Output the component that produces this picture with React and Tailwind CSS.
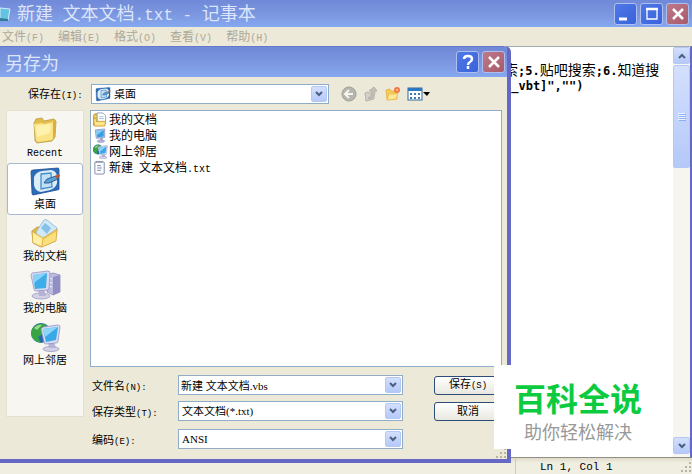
import React, { useState } from 'react';

const latinSizes = {
  small: "font-['Liberation_Mono',monospace] text-[9px]",
  base: "font-['Liberation_Mono',monospace] text-[10px]",
  editor: "font-['DejaVu_Sans_Mono',monospace] text-[12px] font-bold",
  title: "font-['Liberation_Mono',monospace] text-[16px]",
};

// Latin glyphs are set smaller so they take about half of a Chinese character
const Mixed = ({ text, size = 'base' }) => (
  <span className="whitespace-pre">
    {text.split(/([\x20-\x7e]+)/).map((part, i) =>
      i % 2 ? (
        <span key={i} className={`leading-none ${latinSizes[size]}`}>{part}</span>
      ) : (
        part
      )
    )}
  </span>
);

const FolderIcon = ({ className }) => (
  <svg className={className} viewBox="0 0 32 30">
    <path d="M5 9l2-4 6-1 2 3 10-2 2 2-1 16-3 4-15 2-2-2z" fill="#e3bd4c" stroke="#b99a48" strokeWidth=".8" />
    <path d="M5 10l8-1 2 1 9-2 1 15-2 3-14 2-2-2z" fill="#fbe486" />
    <path d="M7 12l15-2-1 9-13 4z" fill="#fff2ae" />
    <path d="M24 8l3-1-1 16-2 3z" fill="#d9b040" />
  </svg>
);

const DesktopIcon = ({ className }) => (
  <svg className={className} viewBox="0 0 32 30">
    <path d="M4 4l25-2q1 0 1 2v19q0 1-2 1L4 29q-1 0-1-2L2 6q0-2 2-2z" fill="#2d6cb9" stroke="#1a4f93" strokeWidth=".8" />
    <path d="M5 11q2-5 8-6l9-1q6 1 6 7v6q-1 5-7 7l-9 2q-6-1-7-7z" fill="#dcedf5" />
    <path d="M12 8l10-1 1 14-11 2z" fill="#bfe0f8" stroke="#448ecb" strokeWidth="1.3" />
    <path d="M15 17l3-4 9-3 2 3-9 4z" fill="#5aa2d6" stroke="#23558c" strokeWidth=".9" />
    <path d="M26 10l4-2 1 2-3 3z" fill="#bd5334" />
  </svg>
);

const DocumentsIcon = ({ className }) => (
  <svg className={className} viewBox="0 0 32 30">
    <path d="M3 13l5-4 20 2-2 12-14 6-8-4z" fill="#e6b943" stroke="#c79a3a" strokeWidth=".8" />
    <path d="M7 14l8-12q1-1 3 0l10 8-5 14-13 2z" fill="#cfe9f7" stroke="#86b4d2" strokeWidth=".8" />
    <path d="M12 10l4-5 6 5-4 6z" fill="#85c1e8" />
    <path d="M3 13l11 7 14-9-1 12-14 6-9-4z" fill="#fbdf7b" stroke="#d2a644" strokeWidth=".8" />
    <path d="M4 15l9 6-1 7-8-4z" fill="#fff0a8" />
    <path d="M13 28l1-7 13-8" fill="none" stroke="#dfb84e" />
  </svg>
);

const Folder16 = ({ className }) => (
  <svg className={className} viewBox="0 0 16 16">
    <path d="M1 5l1-3h4l2 2h4v10H1z" fill="#f0c650" stroke="#b38e35" />
    <path d="M5 1h6l3 3v8H5z" fill="#fff" stroke="#8c9fb8" />
    <path d="M7 5h5M7 7h5" stroke="#9fc3e2" />
    <path d="M1 7h3v3h10l-1 5H2z" fill="#ffe48a" stroke="#c9a042" />
  </svg>
);

const ComputerIcon = ({ className }) => (
  <svg className={className} viewBox="0 0 32 30">
    <path d="M18 5l6-2 7 2v17l-7 3-6-3z" fill="#bdbcdf" stroke="#8f8dbd" strokeWidth=".8" />
    <path d="M24 7l7-2v17l-7 3z" fill="#908ec4" />
    <path d="M19 8l4 1m-4 3l4 1m-4 3l4 1" stroke="#f2f2fc" />
    <ellipse cx="12" cy="26" rx="9" ry="3" fill="#d3d1e8" stroke="#9d9bc4" strokeWidth=".8" />
    <path d="M9 19h6l2 7h-7z" fill="#b4b2d6" />
    <path d="M3 3l16-2q2 0 2 2l-1 15q0 2-2 2l-11 1q-2 0-2-2L2 5z" fill="#d7daf0" stroke="#9096c5" strokeWidth=".8" />
    <path d="M4 5l14-2-1 15-11 1z" fill="#3cade9" />
    <path d="M4 5l14-2-13 10z" fill="#89d2f7" />
  </svg>
);

const Computer16 = ({ className }) => (
  <svg className={className} viewBox="0 0 16 16">
    <ellipse cx="9" cy="14" rx="4" ry="1.5" fill="#bcbad8" stroke="#908eb5" strokeWidth=".5" />
    <path d="M8 10h3v4H8z" fill="#aaa8cf" />
    <path d="M3 2l10-1v9l-9 1z" fill="#cdd5ef" stroke="#7c8fc4" strokeWidth=".8" />
    <path d="M4 3l8-1v7l-7 1z" fill="#369fe0" />
    <path d="M4 3l8-1-8 6z" fill="#8bcdf5" />
  </svg>
);

const NetworkIcon = ({ className }) => (
  <svg className={className} viewBox="0 0 32 30">
    <circle cx="12" cy="11" r="10" fill="#2468af" />
    <path d="M3 7q6-8 15-4l-6 5 2 4-5 3 3 6q-9-2-10-9z" fill="#37a544" />
    <path d="M5 6q4-4 8-3L8 8z" fill="#9bdb8d" />
    <ellipse cx="22" cy="27" rx="8" ry="2.5" fill="#d3d1e8" stroke="#9d9bc4" strokeWidth=".8" />
    <path d="M19 20h6l2 6h-7z" fill="#b4b2d6" />
    <path d="M14 5l15-2q2 0 2 2l-2 14q0 2-2 2l-10 1q-2 0-2-2L12 7z" fill="#d7daf0" stroke="#9096c5" strokeWidth=".8" />
    <path d="M14 7l15-2-2 13-10 2z" fill="#38a8e8" />
    <path d="M14 7l15-2-13 10z" fill="#8cd4f8" />
  </svg>
);

const TextFileIcon = ({ className }) => (
  <svg className={className} viewBox="0 0 16 16">
    <rect x="2.500" y="2" width="10" height="13" rx="1" fill="#fdfdff" stroke="#8088a0" />
    <path d="M4 1v2m2-2v2m2-2v2m2-2v2" stroke="#747c96" />
    <path d="M5 6h4M5 8.500h5M5 11h4" stroke="#7084ae" />
  </svg>
);

const places = [
  { name: 'Recent', Icon: FolderIcon },
  { name: '桌面', Icon: DesktopIcon },
  { name: '我的文档', Icon: DocumentsIcon },
  { name: '我的电脑', Icon: ComputerIcon },
  { name: '网上邻居', Icon: NetworkIcon },
];

const files = [
  { name: '我的文档', Icon: Folder16 },
  { name: '我的电脑', Icon: Computer16 },
  { name: '网上邻居', Icon: NetworkIcon },
  { name: '新建 文本文档.txt', Icon: TextFileIcon },
];

const menus = ['文件(F)', '编辑(E)', '格式(O)', '查看(V)', '帮助(H)'];

const Chevron = ({ up }) => (
  <svg className="h-2 w-2" viewBox="0 0 8 8" fill="none" stroke="#4a6080" strokeWidth="2">
    <path d={up ? 'M1 6l3-3 3 3' : 'M1 2l3 3 3-3'} />
  </svg>
);

const arrowBox = 'flex items-center justify-center rounded-xs border border-[#b5c8f4] bg-linear-to-b from-[#d3dffd] to-[#b5c9f8]';

const CaptionButton = ({ label, close, children }) => (
  <button
    aria-label={label}
    className={`flex h-[22px] w-[23px] items-center justify-center rounded-[3px] border border-[#aebff0] ${
      close ? 'bg-linear-to-br from-[#bd7a8a] to-[#a95a6a]' : 'bg-linear-to-br from-[#4f78e6] to-[#3a62dc]'
    }`}
  >
    <svg className="h-4 w-4" viewBox="0 0 16 16" fill="none" stroke="#fff" strokeWidth="2.5">
      {children}
    </svg>
  </button>
);

const field = "h-full w-full appearance-none border border-[#8facc8] bg-white text-[11px] leading-none text-black outline-none font-['Liberation_Serif','Noto_Sans_CJK_SC',serif]";

const SelectField = ({ id, value, className = 'px-[3px]' }) => (
  <>
    <select id={id} className={`${field} ${className}`}>
      <option>{value}</option>
    </select>
    <span className={`pointer-events-none absolute inset-y-0.5 right-0.5 w-4 ${arrowBox}`}>
      <Chevron />
    </span>
  </>
);

const FormRow = ({ id, label, children, action }) => (
  <div className="flex h-5 items-center">
    <label htmlFor={id} className="w-[88px] shrink-0 pl-0.5">
      <Mixed text={label} size="small" />
    </label>
    <div className="relative h-5 w-[225px] shrink">{children}</div>
    {action && (
      <button className="ml-auto h-[19px] w-[68px] rounded-[3px] border border-[#2d4d79] bg-linear-to-b from-white to-[#e9e8e0] pb-px leading-none">
        <Mixed text={action} size="small" />
      </button>
    )}
  </div>
);

const Grip = ({ className }) => (
  <svg className={className} viewBox="0 0 12 12" fill="#b8b4a0">
    <path d="M9 1h2v2H9zM5 5h2v2H5zM9 5h2v2H9zM1 9h2v2H1zM5 9h2v2H5zM9 9h2v2H9z" />
  </svg>
);

const SaveDialog = () => {
  const [place, setPlace] = useState('桌面');
  const [fileName, setFileName] = useState('新建 文本文档.vbs');

  return (
    <section className="absolute top-[46px] right-[181px] left-0 rounded-tr-md border-r-4 border-b-4 border-[#6569c5] bg-[#ece9d8] text-[11px]">
      <header className="flex h-[31px] items-center justify-between rounded-tr-sm border-t border-[#6678cc] bg-linear-to-b from-[#7089d8] via-[#7b96df] to-[#86a8f0] pr-0.5 pl-[5px]">
        <h2 className="text-[18px] leading-none text-[#dce5fb]">另存为</h2>
        <div className="flex gap-[3px]">
          <CaptionButton label="帮助">
            <path d="M4 5q0-3 4-3t4 3q0 2-2 3t-2 3" />
            <path d="M8 12v3" />
          </CaptionButton>
          <CaptionButton label="关闭" close>
            <path d="M3 3l10 10M13 3L3 13" />
          </CaptionButton>
        </div>
      </header>

      <div className="mt-[7px] flex h-5 items-center">
        <label htmlFor="folder" className="w-[91px] shrink-0 pb-0.5 pl-7">
          <Mixed text="保存在(I):" size="small" />
        </label>
        <div className="relative h-5 w-[238px] shrink">
          <SelectField id="folder" value="桌面" className="pl-[22px]" />
          <DesktopIcon className="pointer-events-none absolute top-0.5 left-1 h-4 w-4" />
        </div>
        <div className="ml-3 flex items-center gap-1.5">
          <button aria-label="后退">
            <svg className="h-4 w-4" viewBox="0 0 16 16">
              <circle cx="8" cy="8" r="7" fill="#b6b5ae" stroke="#a09f98" />
              <path d="M12 8H5m3-4L4 8l4 4" fill="none" stroke="#f5f4ee" strokeWidth="2" />
            </svg>
          </button>
          <button aria-label="向上一级">
            <svg className="h-4 w-4" viewBox="0 0 16 16" stroke="#a9a8a0" strokeWidth=".8">
              <path d="M2 7l3-1 1 1h5v6l-8 2z" fill="#d3d1c7" />
              <path d="M5 12q4-1 4-7H6l5-4 3 4h-2q0 6-5 8z" fill="#c3c1b9" />
            </svg>
          </button>
          <button aria-label="新建文件夹">
            <svg className="h-4 w-4" viewBox="0 0 16 16">
              <path d="M1 4l4-1 1 2h6v8l-10 1z" fill="#f5cb55" stroke="#e6b04a" strokeWidth=".8" />
              <path d="M2 14l2-6h9l-2 5z" fill="#ffe994" stroke="#eaba52" strokeWidth=".8" />
              <circle cx="12" cy="4" r="3" fill="#f07a42" />
              <circle cx="12" cy="4" r="1" fill="#ffd9a0" />
            </svg>
          </button>
          <button aria-label="查看方式">
            <svg className="h-4 w-6" viewBox="0 0 24 16">
              <rect x="1" y="2" width="14" height="12" fill="#fff" stroke="#32689c" />
              <path d="M1 2h14v3H1z" fill="#2c76c2" />
              <path d="M3 7h2v2H3zm4 0h2v2H7zm4 0h2v2h-2zM3 11h2v2H3zm4 0h2v2H7zm4 0h2v2h-2z" fill="#3e7ab1" />
              <path d="M16 6h7l-3 4z" fill="#000" />
            </svg>
          </button>
        </div>
      </div>

      <div className="mt-1.5 flex gap-1.5 pr-[5px] pb-2.5 pl-1.5">
        <nav className="w-[78px] shrink-0 self-start border border-[#e4e1d3] bg-[#f7f6f1] pb-[45px]">
          {places.map(({ name, Icon }) => (
            <button
              key={name}
              onClick={() => setPlace(name)}
              className={`flex h-13 w-full flex-col items-center rounded-[3px] border pt-0.5 leading-[14px] ${
                place === name ? 'border-[#a9b8d0] bg-white' : 'border-transparent'
              }`}
            >
              <Icon className="h-[30px] w-8" />
              <Mixed text={name} size={name === 'Recent' ? 'base' : 'small'} />
            </button>
          ))}
        </nav>

        <div className="flex min-w-0 flex-1 flex-col gap-1.5">
          <ul className="mb-0.5 h-[257px] border border-[#8facc8] bg-white text-[12px]">
            {files.map(({ name, Icon }) => (
              <li key={name} className="flex h-4 items-center gap-px pl-px leading-[14px]">
                <Icon className="h-[15px] w-4" />
                <Mixed text={name} />
              </li>
            ))}
          </ul>
          <FormRow id="filename" label="文件名(N):" action="保存(S)">
            <input id="filename" value={fileName} onChange={(e) => setFileName(e.target.value)} className={`${field} px-0.5`} />
            <button aria-label="最近的文件名" className={`absolute inset-y-0.5 right-0.5 w-4 ${arrowBox}`}>
              <Chevron />
            </button>
          </FormRow>
          <FormRow id="filetype" label="保存类型(T):" action="取消">
            <SelectField id="filetype" value="文本文档(*.txt)" />
          </FormRow>
          <div className="mt-0.5">
            <FormRow id="encoding" label="编码(E):">
              <SelectField id="encoding" value="ANSI" />
            </FormRow>
          </div>
        </div>
      </div>
      <Grip className="absolute right-0 bottom-0 h-3 w-3" />
    </section>
  );
};

const App = () => {
  return (
    <div className="relative flex min-h-screen flex-col overflow-hidden bg-[#ece9d8] text-black font-['Noto_Sans_CJK_SC',sans-serif]">
      <header className="flex h-[27px] items-center justify-between bg-linear-to-b from-[#7089d8] via-[#7b96df] to-[#86a8f0] pr-[3px]">
        <div className="flex items-center gap-1.5">
          <svg className="h-4 w-[11px]" viewBox="0 0 11 16">
            <path d="M0 2l10 1-2 11-8-1z" fill="#62c3e5" stroke="#d4edf8" />
            <path d="M0 12l8 1v2H0z" fill="#327a9c" />
          </svg>
          <h1 className="text-[18px] leading-none text-[#dce5fb]">
            <Mixed text="新建 文本文档.txt - 记事本" size="title" />
          </h1>
        </div>
        <div className="flex gap-[3px]">
          <CaptionButton label="最小化">
            <path d="M1 13h8" strokeWidth="3" />
          </CaptionButton>
          <CaptionButton label="最大化">
            <path d="M3 3h10v10H3z" strokeWidth="1.3" />
            <path d="M2 3h12" />
          </CaptionButton>
          <CaptionButton label="关闭" close>
            <path d="M3 3l10 10M13 3L3 13" />
          </CaptionButton>
        </div>
      </header>

      <nav className="flex h-[19px] items-center gap-3.5 pl-0.5 text-[12px] leading-none text-[#aca899]">
        {menus.map((menu) => (
          <button key={menu}>
            <Mixed text={menu} />
          </button>
        ))}
      </nav>

      <div className="flex flex-1 border-t border-r-2 border-b border-t-[#a5acb2] border-r-[#6569c5] border-b-[#918f84] bg-white">
        <main className="min-w-0 flex-1 overflow-hidden pt-[15px] pl-[504px] text-[14px] leading-[15px]">
          <p><Mixed text="索;5.贴吧搜索;6.知道搜" size="editor" /></p>
          <p><Mixed text={' _vbt]","")'} size="editor" /></p>
        </main>
        <div className="flex w-[17px] flex-col gap-px bg-[#f6f5f0] pb-[3px]">
          <button aria-label="向上滚动" className={`h-[17px] ${arrowBox}`}><Chevron up /></button>
          <div className={`h-[103px] ${arrowBox}`}>
            <svg className="h-2 w-2" viewBox="0 0 8 8" stroke="#eef4fe">
              <path d="M0 .5h7M0 2.5h7M0 4.5h7M0 6.5h7" />
              <path d="M1 1.5h7M1 3.5h7M1 5.5h7M1 7.5h7" stroke="#8cb0f8" />
            </svg>
          </div>
          <button aria-label="向下滚动" className={`mt-auto h-[17px] ${arrowBox}`}><Chevron /></button>
        </div>
      </div>

      <footer className="flex h-4 items-center justify-end bg-linear-to-b from-[#dedbca] to-[#f0eee1] to-30%">
        <div className="flex h-full w-[177px] items-center justify-between border-l border-[#d0cdbc] pt-0.5 pl-6 font-['Liberation_Mono',monospace] text-[11px] leading-none">
          Ln 1, Col 1
          <Grip className="h-3 w-3" />
        </div>
      </footer>

      <SaveDialog />

      <aside className="absolute right-[22px] bottom-[25px] flex w-[176px] flex-col items-center bg-white pt-2.5 pr-2 pb-1.5">
        <strong className="text-[32px] leading-[44px] font-bold text-[#0dcb3f]">百科全说</strong>
        <span className="text-[18px] leading-6 text-[#999]">助你轻松解决</span>
      </aside>
    </div>
  );
};

export default App;
